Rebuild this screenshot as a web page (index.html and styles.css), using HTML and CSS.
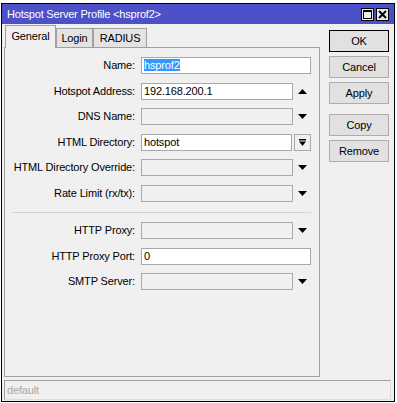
FILE: index.html
```html
<!DOCTYPE html>
<html>
<head>
<meta charset="utf-8">
<title>Hotspot Server Profile</title>
<link rel="stylesheet" href="styles.css">
</head>
<body>
<div class="window">
	<div class="titlebar">
		<span class="title">Hotspot Server Profile &lt;hsprof2&gt;</span>
		<div class="wbtns">
			<span class="wbtn"><svg width="9" height="9" viewBox="0 0 9 9"><rect x="0.5" y="0.5" width="8" height="8" fill="none" stroke="#000"/><rect x="0" y="0" width="9" height="2" fill="#000"/></svg></span>
			<span class="wbtn"><svg width="9" height="9" viewBox="0 0 9 9"><path d="M1 1L8 8M8 1L1 8" stroke="#000" stroke-width="2"/></svg></span>
		</div>
	</div>
	<div class="client">
		<div class="main">
			<div class="tabs">
				<div class="tab active t-general">General</div>
				<div class="tab t-login">Login</div>
				<div class="tab t-radius">RADIUS</div>
			</div>
			<div class="panel">
				<div class="form">
					<label>Name:</label>
					<div class="ctl"><div class="field edit"><span class="sel">hsprof2</span></div></div>

					<label>Hotspot Address:</label>
					<div class="ctl"><div class="field edit">192.168.200.1</div><span class="arrow"><svg width="9" height="5" viewBox="0 0 9 5"><path d="M0 5L4.5 0L9 5Z"/></svg></span></div>

					<label>DNS Name:</label>
					<div class="ctl"><div class="field"></div><span class="arrow"><svg width="9" height="5" viewBox="0 0 9 5"><path d="M0 0L9 0L4.5 5Z"/></svg></span></div>

					<label>HTML Directory:</label>
					<div class="ctl"><div class="field edit">hotspot</div><span class="dirbtn"><svg width="7" height="7" viewBox="0 0 7 7"><rect x="0" y="0" width="7" height="1.5"/><path d="M0 2.5L7 2.5L3.5 7Z"/></svg></span></div>

					<label>HTML Directory Override:</label>
					<div class="ctl"><div class="field"></div><span class="arrow"><svg width="9" height="5" viewBox="0 0 9 5"><path d="M0 0L9 0L4.5 5Z"/></svg></span></div>

					<label>Rate Limit (rx/tx):</label>
					<div class="ctl"><div class="field"></div><span class="arrow"><svg width="9" height="5" viewBox="0 0 9 5"><path d="M0 0L9 0L4.5 5Z"/></svg></span></div>

					<div class="sep"></div>

					<label>HTTP Proxy:</label>
					<div class="ctl"><div class="field"></div><span class="arrow"><svg width="9" height="5" viewBox="0 0 9 5"><path d="M0 0L9 0L4.5 5Z"/></svg></span></div>

					<label>HTTP Proxy Port:</label>
					<div class="ctl"><div class="field edit">0</div></div>

					<label>SMTP Server:</label>
					<div class="ctl"><div class="field"></div><span class="arrow"><svg width="9" height="5" viewBox="0 0 9 5"><path d="M0 0L9 0L4.5 5Z"/></svg></span></div>
				</div>
			</div>
		</div>
		<div class="buttons">
			<div class="btn default">OK</div>
			<div class="btn">Cancel</div>
			<div class="btn">Apply</div>
			<div class="btn gap">Copy</div>
			<div class="btn">Remove</div>
		</div>
	</div>
	<div class="status">default</div>
</div>
</body>
</html>
```

FILE: styles.css
```css
*{margin:0;padding:0;box-sizing:border-box}
body{background:#fff;font-family:"Liberation Sans",Arial,sans-serif;font-size:11px;letter-spacing:-0.15px;color:#000}

.window{margin:3px 0 0 1px;width:394px;height:399px;border:1px solid #000;background:#f0f0f0}

/* title bar */
.titlebar{height:20px;background:#4c50c9;color:#fff;display:flex;align-items:center;justify-content:space-between;padding:0 5px 0 5px}
.title{font-size:11px;letter-spacing:-0.2px}
.wbtns{display:flex;gap:2px;padding-top:1px}
.wbtn{width:13px;height:13px;border:1px solid #000;background:#ececec;display:flex;align-items:center;justify-content:center}

/* client area */
.client{display:flex;height:353px;padding:1px 0 0 2px}
.main{width:316px;display:flex;flex-direction:column}

.tabs{display:flex;align-items:flex-end;height:22px;padding-left:1px}
.tab{height:19px;border:1px solid #a0a0a0;border-bottom:none;background:#e3e3e3;text-align:center;line-height:19px}
.tab.active{height:23px;margin-bottom:-1px;background:#f0f0f0;line-height:21px;position:relative;z-index:1}
.t-general{width:51px}
.t-login{width:37px}
.t-radius{width:54px}

.panel{flex:1;border:1px solid #a0a0a0;padding:9px 8px 0 0}

.form{display:grid;grid-template-columns:130px 170px;column-gap:6px;row-gap:8.6px}
.form label{text-align:right;line-height:17px;white-space:nowrap}
.ctl{display:flex;height:17px}
.field{flex:1;border:1px solid #a8a8a8;background:#f0f0f0;line-height:15px;padding-left:2px;white-space:nowrap}
.field.edit{background:#fff}
.sel{background:#3399ff;color:#fff}
.arrow{width:18px;display:flex;align-items:center;justify-content:center}
.dirbtn{width:17px;margin-left:2px;border:1px solid #a8a8a8;background:#f0f0f0;display:flex;align-items:center;justify-content:center}
.sep{grid-column:1/3;height:1px;background:#d4d4d4;margin:1.4px 0 0.4px 8px}

/* buttons on the right */
.buttons{width:60px;margin-left:9px;padding-top:5px;display:flex;flex-direction:column;gap:4px}
.btn{height:22px;border:1px solid #adadad;background:#e1e1e1;text-align:center;line-height:20px}
.btn.default{border-color:#000}
.btn.gap{margin-top:6px}

.status{margin:3px 0 0 2px;width:387px;height:20px;border:1px solid;border-color:#a0a0a0 #dcdcdc #dcdcdc #a0a0a0;color:#a8a8a8;padding-left:2px;line-height:18px}
```
